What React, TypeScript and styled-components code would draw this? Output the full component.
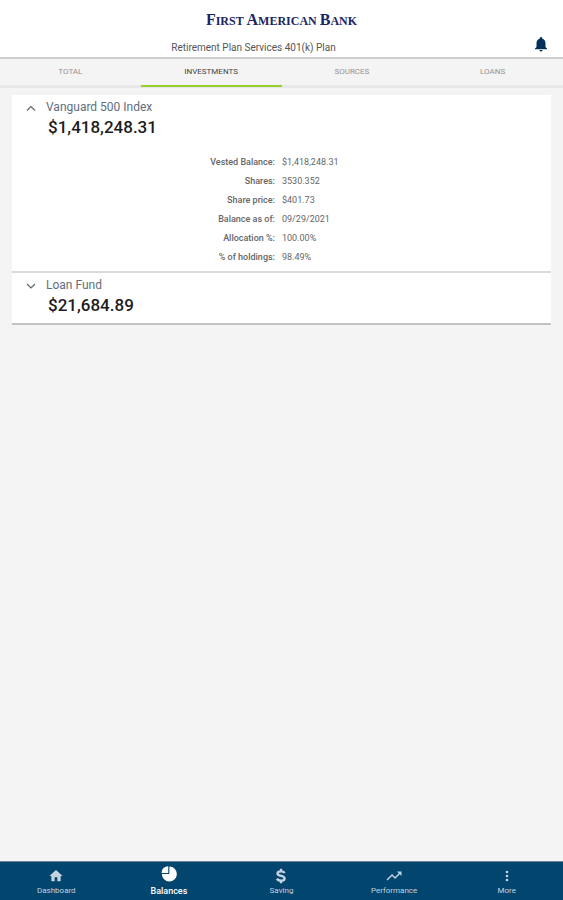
import React, { useState } from "react";
import styled, { createGlobalStyle } from "styled-components";

const GlobalStyle = createGlobalStyle`
  * { box-sizing: border-box; }
  body {
    margin: 0;
    background: #f4f4f4;
    font-family: Roboto, "Liberation Sans", sans-serif;
  }
  button { font-family: inherit; border: 0; padding: 0; background: none; cursor: pointer; }
`;

const Page = styled.div`
  min-height: 100vh;
  display: flex;
  flex-direction: column;
`;

const Header = styled.header`
  display: grid;
  grid-template-columns: 44px 1fr 44px;
  align-items: end;
  padding-top: 9px;
  background: #fff;
  border-bottom: 2px solid #cfcfcf;
`;

const Brand = styled.div`
  grid-column: 2;
  display: flex;
  flex-direction: column;
  align-items: center;
`;

const Logo = styled.h1`
  margin: 0;
  font: 700 12px/22px "Liberation Serif", serif;
  color: #1c2466;
  white-space: nowrap;
`;

const Capital = styled.span`
  font-size: 16px;
`;

const PlanName = styled.p`
  margin: 0;
  padding: 8px 56px 1px 0;
  font-size: 10px;
  line-height: 16px;
  color: #555;
`;

const BellButton = styled.button`
  display: flex;
  justify-content: center;
  padding-bottom: 4px;
  color: #04305c;
`;

const Tabs = styled.nav`
  display: grid;
  grid-template-columns: repeat(4, 1fr);
  border-bottom: 1px solid #e6e6e6;
`;

const Tab = styled.button<{ $active: boolean }>`
  height: 28px;
  padding-bottom: 1px;
  font-size: 8px;
  line-height: 12px;
  text-transform: uppercase;
  color: ${(p) => (p.$active ? "#444" : "#929292")};
  border-bottom: 2px solid ${(p) => (p.$active ? "#94cf2c" : "#e8e8e8")};
`;

const Main = styled.main`
  flex: 1;
  padding: 7px 12px;
`;

const Card = styled.section`
  background: #fff;
  border-bottom: 2px solid #c2c2c2;
`;

const Fund = styled.article`
  & + & { border-top: 2px solid #dadada; }
`;

const FundToggle = styled.button`
  width: 100%;
  display: grid;
  grid-template-columns: 34px 1fr;
  grid-template-rows: 17px 23px;
  align-items: center;
  padding: 3px 0 7px;
  text-align: left;
`;

const ChevronSlot = styled.span`
  display: flex;
  padding: 2px 0 0 14px;
  color: #666;
`;

const FundName = styled.span`
  font-size: 12px;
  line-height: 16px;
  color: #5f6d80;
`;

const Amount = styled.span`
  grid-column: 2;
  padding-left: 2px;
  font-size: 17px;
  line-height: 22px;
  font-weight: 500;
  color: #1c1c1c;
`;

const Details = styled.dl`
  display: grid;
  grid-template-columns: 263fr 269fr;
  column-gap: 7px;
  margin: 0;
  padding: 8px 0 4px;
  font-size: 9px;
  line-height: 19px;
`;

const Term = styled.dt`
  text-align: right;
  font-weight: 500;
  color: #666;
`;

const Value = styled.dd`
  margin: 0;
  color: #666;
`;

const BottomBar = styled.nav`
  position: sticky;
  bottom: 0;
  display: grid;
  grid-template-columns: repeat(5, 1fr);
  border-top: 1px solid #6c8598;
  background: #02456e;
`;

const NavButton = styled.button<{ $active: boolean }>`
  display: flex;
  flex-direction: column;
  align-items: center;
  justify-content: flex-end;
  height: 38px;
  padding-bottom: 3px;
  color: ${(p) => (p.$active ? "#fff" : "#c3d3df")};
  font-size: ${(p) => (p.$active ? 9 : 8)}px;
  font-weight: ${(p) => (p.$active ? 500 : 400)};
  line-height: 12px;
`;

const IconSlot = styled.span<{ $active: boolean }>`
  display: flex;
  align-items: center;
  height: 18px;
  margin-bottom: ${(p) => (p.$active ? 2 : 0)}px;
`;

const iconPaths: Record<string, string> = {
  home: "M10 20v-6h4v6h5v-8h3L12 3 2 12h3v8z",
  trend: "M16 6l2.290 2.290-4.880 4.880-4-4L2 16.590 3.410 18l6-6 4 4 6.300-6.290L22 12V6z",
  more: "M12 8a2 2 0 1 0 0-4 2 2 0 0 0 0 4zm0 2a2 2 0 1 0 0 4 2 2 0 0 0 0-4zm0 6a2 2 0 1 0 0 4 2 2 0 0 0 0-4z",
  bell: "M12 22a2 2 0 0 0 2-2h-4a2 2 0 0 0 2 2zm6-6v-5c0-3.070-1.640-5.640-4.500-6.320V4a1.500 1.500 0 0 0-3 0v.680C7.630 5.360 6 7.920 6 11v5l-2 2v1h16v-1z",
};

function Icon({ name, size }: { name: string; size: number }) {
  return (
    <svg width={size} height={size} viewBox="0 0 24 24" fill="currentColor" aria-hidden="true">
      {name === "pie" ? (
        <>
          <path d="M12.500 2A10 10 0 1 1 2.500 12H12.500z" />
          <path d="M11 1.500V10.500H2A9 9 0 0 1 11 1.500z" />
        </>
      ) : name === "dollar" ? (
        <path
          d="M17.500 7.500C16.500 5.700 14.700 5 12 5 8.800 5 6.800 6.300 6.800 8.400c0 4.700 10.600 2.300 10.600 7.200 0 2.200-2.200 3.400-5.400 3.400-2.800 0-4.900-.900-6-3M12 1v4M12 19v4"
          fill="none"
          stroke="currentColor"
          strokeWidth="3.600"
        />
      ) : (
        <path d={iconPaths[name]} />
      )}
    </svg>
  );
}

function Chevron({ open }: { open: boolean }) {
  return (
    <svg width="10" height="10" viewBox="0 0 10 10" fill="none" stroke="currentColor" strokeWidth="1.200" aria-hidden="true">
      <path d={open ? "M1 7.500L5 3.500L9 7.500" : "M1 3L5 7L9 3"} />
    </svg>
  );
}

const tabs = ["Total", "Investments", "Sources", "Loans"];

const funds = [
  {
    name: "Vanguard 500 Index",
    amount: "$1,418,248.31",
    details: [
      ["Vested Balance:", "$1,418,248.31"],
      ["Shares:", "3530.352"],
      ["Share price:", "$401.73"],
      ["Balance as of:", "09/29/2021"],
      ["Allocation %:", "100.00%"],
      ["% of holdings:", "98.49%"],
    ],
  },
  { name: "Loan Fund", amount: "$21,684.89", details: [] },
];

const destinations = [
  { label: "Dashboard", icon: "home", size: 16 },
  { label: "Balances", icon: "pie", size: 18 },
  { label: "Saving", icon: "dollar", size: 16 },
  { label: "Performance", icon: "trend", size: 18 },
  { label: "More", icon: "more", size: 16 },
];

export default function App() {
  const [tab, setTab] = useState("Investments");
  const [section, setSection] = useState("Balances");
  const [openFund, setOpenFund] = useState("Vanguard 500 Index");

  return (
    <Page>
      <GlobalStyle />
      <Header>
        <Brand>
          <Logo>
            <Capital>F</Capital>IRST <Capital>A</Capital>MERICAN <Capital>B</Capital>ANK
          </Logo>
          <PlanName>Retirement Plan Services 401(k) Plan</PlanName>
        </Brand>
        <BellButton aria-label="Notifications">
          <Icon name="bell" size={18} />
        </BellButton>
      </Header>
      <Tabs>
        {tabs.map((t) => (
          <Tab key={t} $active={t === tab} onClick={() => setTab(t)}>
            {t}
          </Tab>
        ))}
      </Tabs>
      <Main>
        <Card>
          {funds.map((fund) => {
            const open = fund.name === openFund;
            return (
              <Fund key={fund.name}>
                <FundToggle aria-expanded={open} onClick={() => setOpenFund(open ? "" : fund.name)}>
                  <ChevronSlot>
                    <Chevron open={open} />
                  </ChevronSlot>
                  <FundName>{fund.name}</FundName>
                  <Amount>{fund.amount}</Amount>
                </FundToggle>
                {open && fund.details.length > 0 && (
                  <Details>
                    {fund.details.map(([term, value]) => (
                      <React.Fragment key={term}>
                        <Term>{term}</Term>
                        <Value>{value}</Value>
                      </React.Fragment>
                    ))}
                  </Details>
                )}
              </Fund>
            );
          })}
        </Card>
      </Main>
      <BottomBar>
        {destinations.map(({ label, icon, size }) => (
          <NavButton key={label} $active={label === section} onClick={() => setSection(label)}>
            <IconSlot $active={label === section}>
              <Icon name={icon} size={size} />
            </IconSlot>
            {label}
          </NavButton>
        ))}
      </BottomBar>
    </Page>
  );
}
